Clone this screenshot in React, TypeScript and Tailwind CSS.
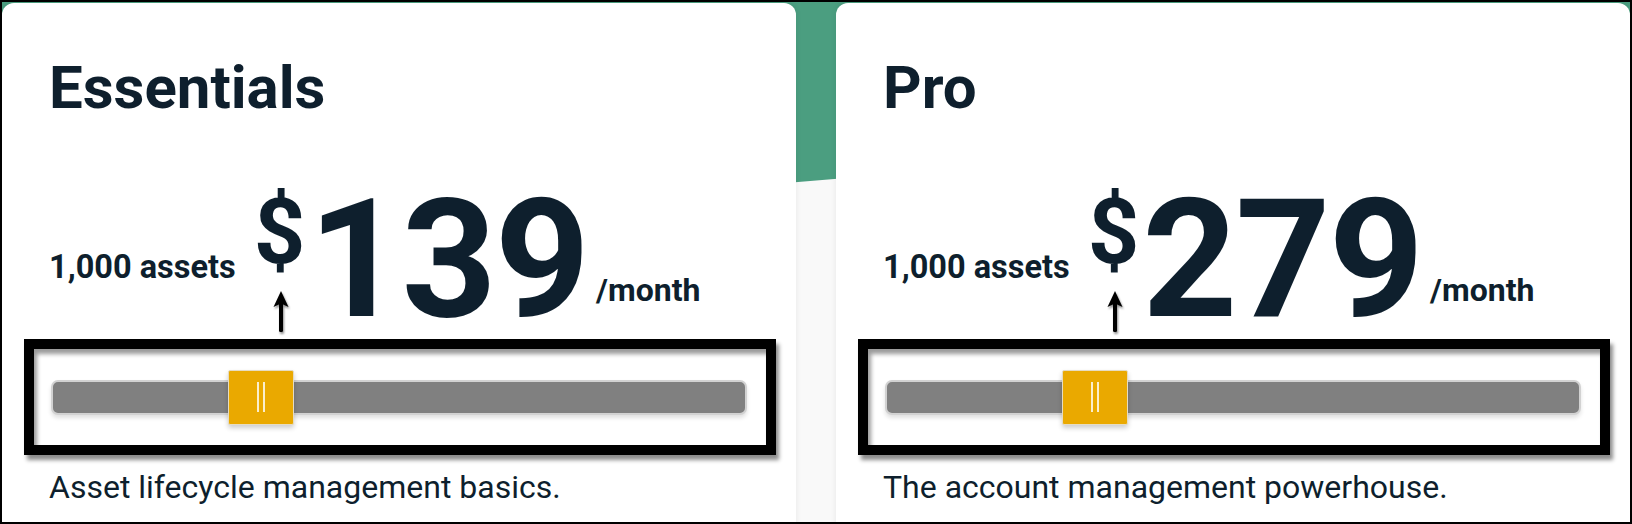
const plans = [
  { name: "Essentials", price: "139", blurb: "Asset lifecycle management basics." },
  { name: "Pro", price: "279", blurb: "The account management powerhouse." },
];

function UpArrow() {
  return (
    <svg
      width="20"
      height="42"
      viewBox="0 0 20 42"
      className="absolute left-[269px] top-[288px] drop-shadow-[1px_2px_1px_rgba(0,0,0,0.45)]"
    >
      <path d="M10 0 L17.5 16 L10 12.5 L2.5 16 Z" fill="#000" />
      <rect x="8" y="10" width="4" height="31" rx="1.5" fill="#000" />
    </svg>
  );
}

function Slider() {
  return (
    <div className="ml-[-25px] w-[752px] h-[116px] border-[10px] border-black bg-white shadow-[3px_5px_4px_rgba(0,0,0,0.45),inset_3px_5px_4px_rgba(0,0,0,0.4)] flex items-center pl-[17px]">
      <div className="relative w-[696px] h-[35px] rounded-[7px] border-2 border-[#d2d2d2] bg-[#808080] shadow-[0_3px_4px_rgba(0,0,0,0.12)]">
        <div className="absolute left-[175px] top-[-12px] w-[66px] h-[55px] bg-[#eaa900] border border-[#e6dcc2] rounded-[2px] shadow-[0_3px_5px_rgba(0,0,0,0.2)] flex items-center justify-center gap-[4px]">
          <span className="block w-[2px] h-[30px] bg-[#fbeecd]" />
          <span className="block w-[2px] h-[30px] bg-[#fbeecd]" />
        </div>
      </div>
    </div>
  );
}

function PlanCard({ name, price, blurb }: { name: string; price: string; blurb: string }) {
  return (
    <div className="relative w-[794px] h-[560px] shrink-0 mt-[1px] bg-white rounded-t-[12px] shadow-[0_0_6px_rgba(0,0,0,0.08)] pl-[47px] pt-[55px] text-[#0e1f2d]">
      <h2 className="text-[60px] leading-none font-bold">{name}</h2>
      <div className="mt-[59px] h-[162px] flex items-start font-bold leading-none">
        <span className="mt-[74px] text-[32.5px]">1,000 assets</span>
        <span className="mt-[11px] ml-[18px] text-[90px]">$</span>
        <span className="ml-[3px] text-[166px] tracking-[-2px]">{price}</span>
        <span className="mt-[97px] ml-[8px] text-[32px]">/month</span>
      </div>
      <Slider />
      <p className="mt-[16px] text-[32px] leading-none">{blurb}</p>
      <UpArrow />
    </div>
  );
}

export default function App() {
  return (
    <div className="relative w-[1632px] h-[524px] overflow-hidden border-2 border-black bg-[#f9f9f9] font-['Roboto',sans-serif]">
      <div className="absolute inset-0 bg-[#4b9e80] [clip-path:polygon(0_0,100%_0,100%_111px,0_246px)]" />
      <div className="relative flex gap-[40px]">
        {plans.map((p) => (
          <PlanCard key={p.name} {...p} />
        ))}
      </div>
    </div>
  );
}
